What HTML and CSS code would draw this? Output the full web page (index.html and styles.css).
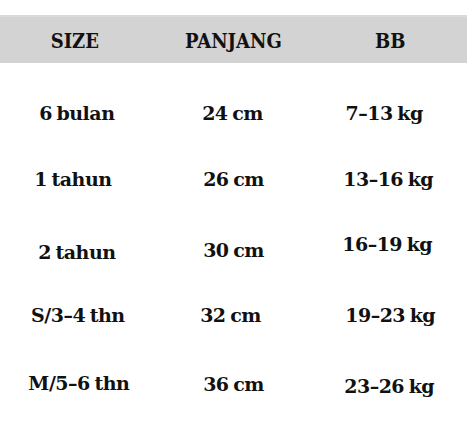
FILE: index.html
```html
<!DOCTYPE html>
<html lang="id">
<head>
<meta charset="utf-8">
<title>Size Chart</title>
<link rel="stylesheet" href="styles.css">
</head>
<body>
<div class="chart">
  <div class="head">
    <div class="hcell sl3">SIZE</div>
    <div class="hcell">PANJANG</div>
    <div class="hcell sr1">BB</div>
  </div>
  <div class="rows">
    <div class="cell sl1">6 bulan</div>
    <div class="cell sl1">24 cm</div>
    <div class="cell sl5">7–13 kg</div>

    <div class="cell sl5">1 tahun</div>
    <div class="cell">26 cm</div>
    <div class="cell sl1">13–16 kg</div>

    <div class="cell drop2 sl1">2 tahun</div>
    <div class="cell">30 cm</div>
    <div class="cell lift6 sl2">16–19 kg</div>

    <div class="cell">S/3–4 thn</div>
    <div class="cell sl3">32 cm</div>
    <div class="cell sr1">19–23 kg</div>

    <div class="cell sr1">M/5–6 thn</div>
    <div class="cell drop1">36 cm</div>
    <div class="cell drop3">23–26 kg</div>
  </div>
</div>
</body>
</html>
```

FILE: styles.css
```css
html, body {
  margin: 0;
  padding: 0;
  background: #ffffff;
}

.chart {
  width: 467px;
  height: 439px;
  font-family: "DejaVu Serif", serif;
  font-weight: bold;
  color: #111111;
  padding-top: 15px;
  box-sizing: border-box;
}

.head {
  display: grid;
  grid-template-columns: repeat(3, 1fr);
  height: 48px;
  box-sizing: border-box;
  padding-top: 2px;
  background: #d3d3d3;
  border-top: 2px solid #dadada;
}

.hcell {
  text-align: center;
  font-family: "DejaVu Serif Condensed", "DejaVu Serif", serif;
  font-stretch: condensed;
  font-size: 20px;
  line-height: 44px;
}

.rows {
  display: grid;
  grid-template-columns: repeat(3, 1fr);
  grid-template-rows: 66px 71px 65px 68px 22px;
  padding-top: 39px;
}

.cell {
  text-align: center;
  font-size: 19px;
  letter-spacing: -0.5px;
  word-spacing: -1.5px;
  line-height: 22px;
  height: 22px;
  white-space: nowrap;
}

/* small vertical nudges */
.drop1 { margin-top: 1px; }
.drop2 { margin-top: 2px; }
.drop3 { margin-top: 3px; }
.lift6 { margin-top: -6px; }

/* small horizontal nudges (shift the centred text) */
.sl1 { padding-right: 2px; }
.sl2 { padding-right: 4px; }
.sl3 { padding-right: 6px; }
.sl5 { padding-right: 10px; }
.sr1 { padding-left: 2px; }
```
